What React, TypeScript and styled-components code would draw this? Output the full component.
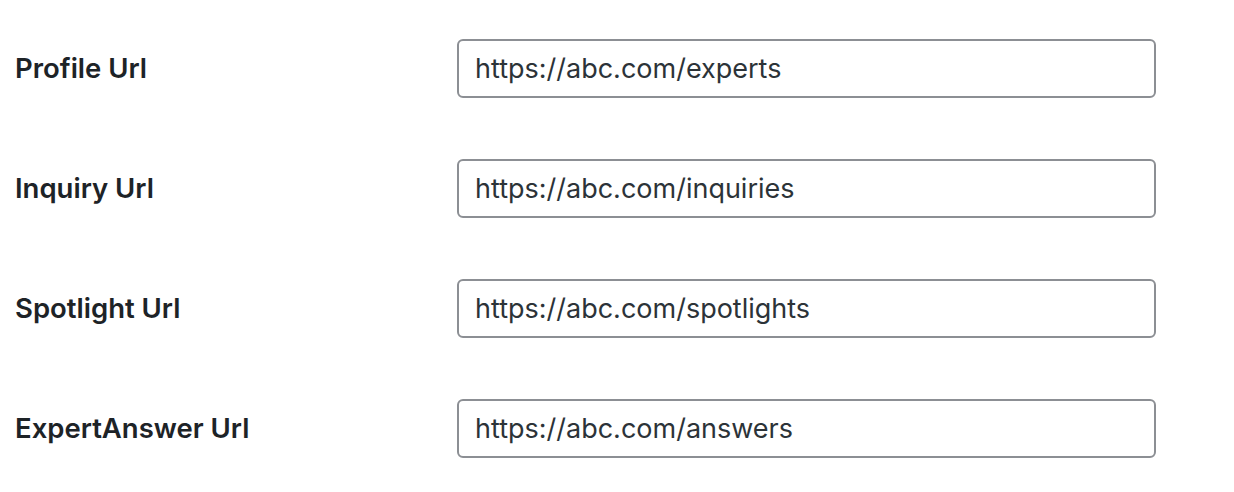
import React from "react";
import styled, { createGlobalStyle } from "styled-components";

const GlobalStyle = createGlobalStyle`
  html, body {
    margin: 0;
    padding: 0;
    background: #fff;
  }
  body {
    font-family: Inter, "Noto Sans", "Liberation Sans", sans-serif;
    color: #1d2327;
  }
`;

const fields = [
  { label: "Profile Url", value: "https://abc.com/experts" },
  { label: "Inquiry Url", value: "https://abc.com/inquiries" },
  { label: "Spotlight Url", value: "https://abc.com/spotlights" },
  { label: "ExpertAnswer Url", value: "https://abc.com/answers" },
];

export default function App() {
  return (
    <>
      <GlobalStyle />
      <FormTable>
        {fields.map((f) => (
          <Row key={f.label}>
            <Label htmlFor={f.label}>{f.label}</Label>
            <TextInput id={f.label} type="text" defaultValue={f.value} />
          </Row>
        ))}
      </FormTable>
    </>
  );
}

const FormTable = styled.div`
  display: flex;
  flex-direction: column;
  padding: 39px 0 0 15px;
  gap: 61px;
`;

const Row = styled.div`
  display: grid;
  grid-template-columns: 442px 699px;
  align-items: center;
  height: 59px;
`;

const Label = styled.label`
  font-size: 27.5px;
  font-weight: 600;
  color: #1d2327;
  line-height: 1;
`;

const TextInput = styled.input`
  box-sizing: border-box;
  width: 699px;
  height: 59px;
  padding: 0 16px;
  border: 2px solid #8c8f94;
  border-radius: 6px;
  background: #fff;
  font-family: Inter, "Noto Sans", "Liberation Sans", sans-serif;
  font-size: 27px;
  color: #2c3338;
  outline: none;
`;
